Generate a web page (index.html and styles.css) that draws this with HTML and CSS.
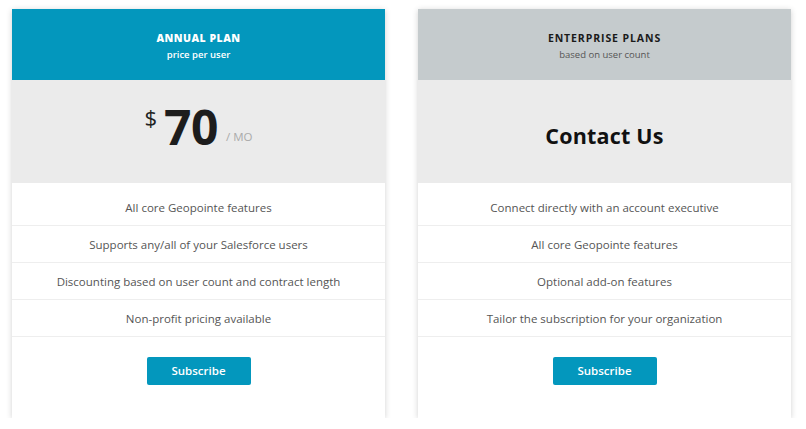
FILE: index.html
```html
<!DOCTYPE html>
<html>
<head>
<meta charset="utf-8">
<link rel="stylesheet" href="styles.css">
</head>
<body>
<div class="plans">
  <div class="card">
    <div class="head head-blue">
      <div class="title">ANNUAL PLAN</div>
      <div class="sub">price per user</div>
    </div>
    <div class="price">
      <span class="cur">$</span><span class="amt">70</span><span class="per">/ MO</span>
    </div>
    <ul class="features">
      <li>All core Geopointe features</li>
      <li>Supports any/all of your Salesforce users</li>
      <li>Discounting based on user count and contract length</li>
      <li>Non-profit pricing available</li>
    </ul>
    <div class="foot"><a class="btn" href="#">Subscribe</a></div>
  </div>
  <div class="card">
    <div class="head head-grey">
      <div class="title">ENTERPRISE PLANS</div>
      <div class="sub">based on user count</div>
    </div>
    <div class="price">
      <span class="contact">Contact Us</span>
    </div>
    <ul class="features">
      <li>Connect directly with an account executive</li>
      <li>All core Geopointe features</li>
      <li>Optional add-on features</li>
      <li>Tailor the subscription for your organization</li>
    </ul>
    <div class="foot"><a class="btn" href="#">Subscribe</a></div>
  </div>
</div>
</body>
</html>
```
FILE: styles.css
```css
* { box-sizing: border-box; }
html, body { margin: 0; padding: 0; background: #fff; }
body { font-family: "Open Sans", "Liberation Sans", sans-serif; }
.plans {
  display: flex;
  align-items: flex-start;
  gap: 33px;
  padding: 9px 0 0 12px;
}
.card {
  width: 373px;
  height: 409px;
  background: #fff;
  box-shadow: 0 1px 6px rgba(0,0,0,0.18);
  display: flex;
  flex-direction: column;
}
.head {
  height: 71px;
  display: flex;
  flex-direction: column;
  align-items: center;
  padding-top: 22px;
}
.head-blue { background: #0397bd; color: #fff; }
.head-grey { background: #c5cbcd; color: #1a1a1a; }
.title {
  font-size: 10.5px;
  font-weight: 700;
  letter-spacing: 0.9px;
  line-height: 15px;
}
.head-blue .title { font-weight: 800; letter-spacing: 0.5px; }
.sub {
  font-size: 9.5px;
  line-height: 14px;
  margin-top: 2px;
}
.head-blue .sub { font-weight: 600; }
.head-grey .sub { color: #555; }
.price {
  height: 103px;
  background: #ebebeb;
  display: flex;
  align-items: center;
  justify-content: center;
}
.cur {
  font-size: 22px;
  color: #222;
  align-self: flex-start;
  margin-top: 22px;
  margin-right: 7px;
}
.amt {
  font-size: 48px;
  font-weight: 700;
  color: #1d1d1d;
  letter-spacing: -0.5px;
  line-height: 1;
  margin-top: -10px;
}
.per {
  font-size: 11.5px;
  color: #aaa;
  margin-left: 8px;
  margin-top: 10px;
}
.contact {
  font-size: 21.5px;
  font-weight: 700;
  color: #111;
  letter-spacing: 0.2px;
  margin-top: 8px;
}
.features {
  list-style: none;
  margin: 0;
  padding: 0;
}
.features li {
  font-size: 11.5px;
  color: #555;
  text-align: center;
  height: 37px;
  line-height: 37px;
  border-bottom: 1px solid #eee;
}
.features li:first-child {
  height: 43px;
  padding-top: 6px;
}
.foot {
  display: flex;
  justify-content: center;
  padding-top: 20px;
}
.btn {
  display: block;
  width: 104px;
  height: 28px;
  line-height: 28px;
  background: #0397bd;
  color: #fff;
  text-decoration: none;
  text-align: center;
  font-size: 11.5px;
  font-weight: 600;
  border-radius: 2px;
}
```
